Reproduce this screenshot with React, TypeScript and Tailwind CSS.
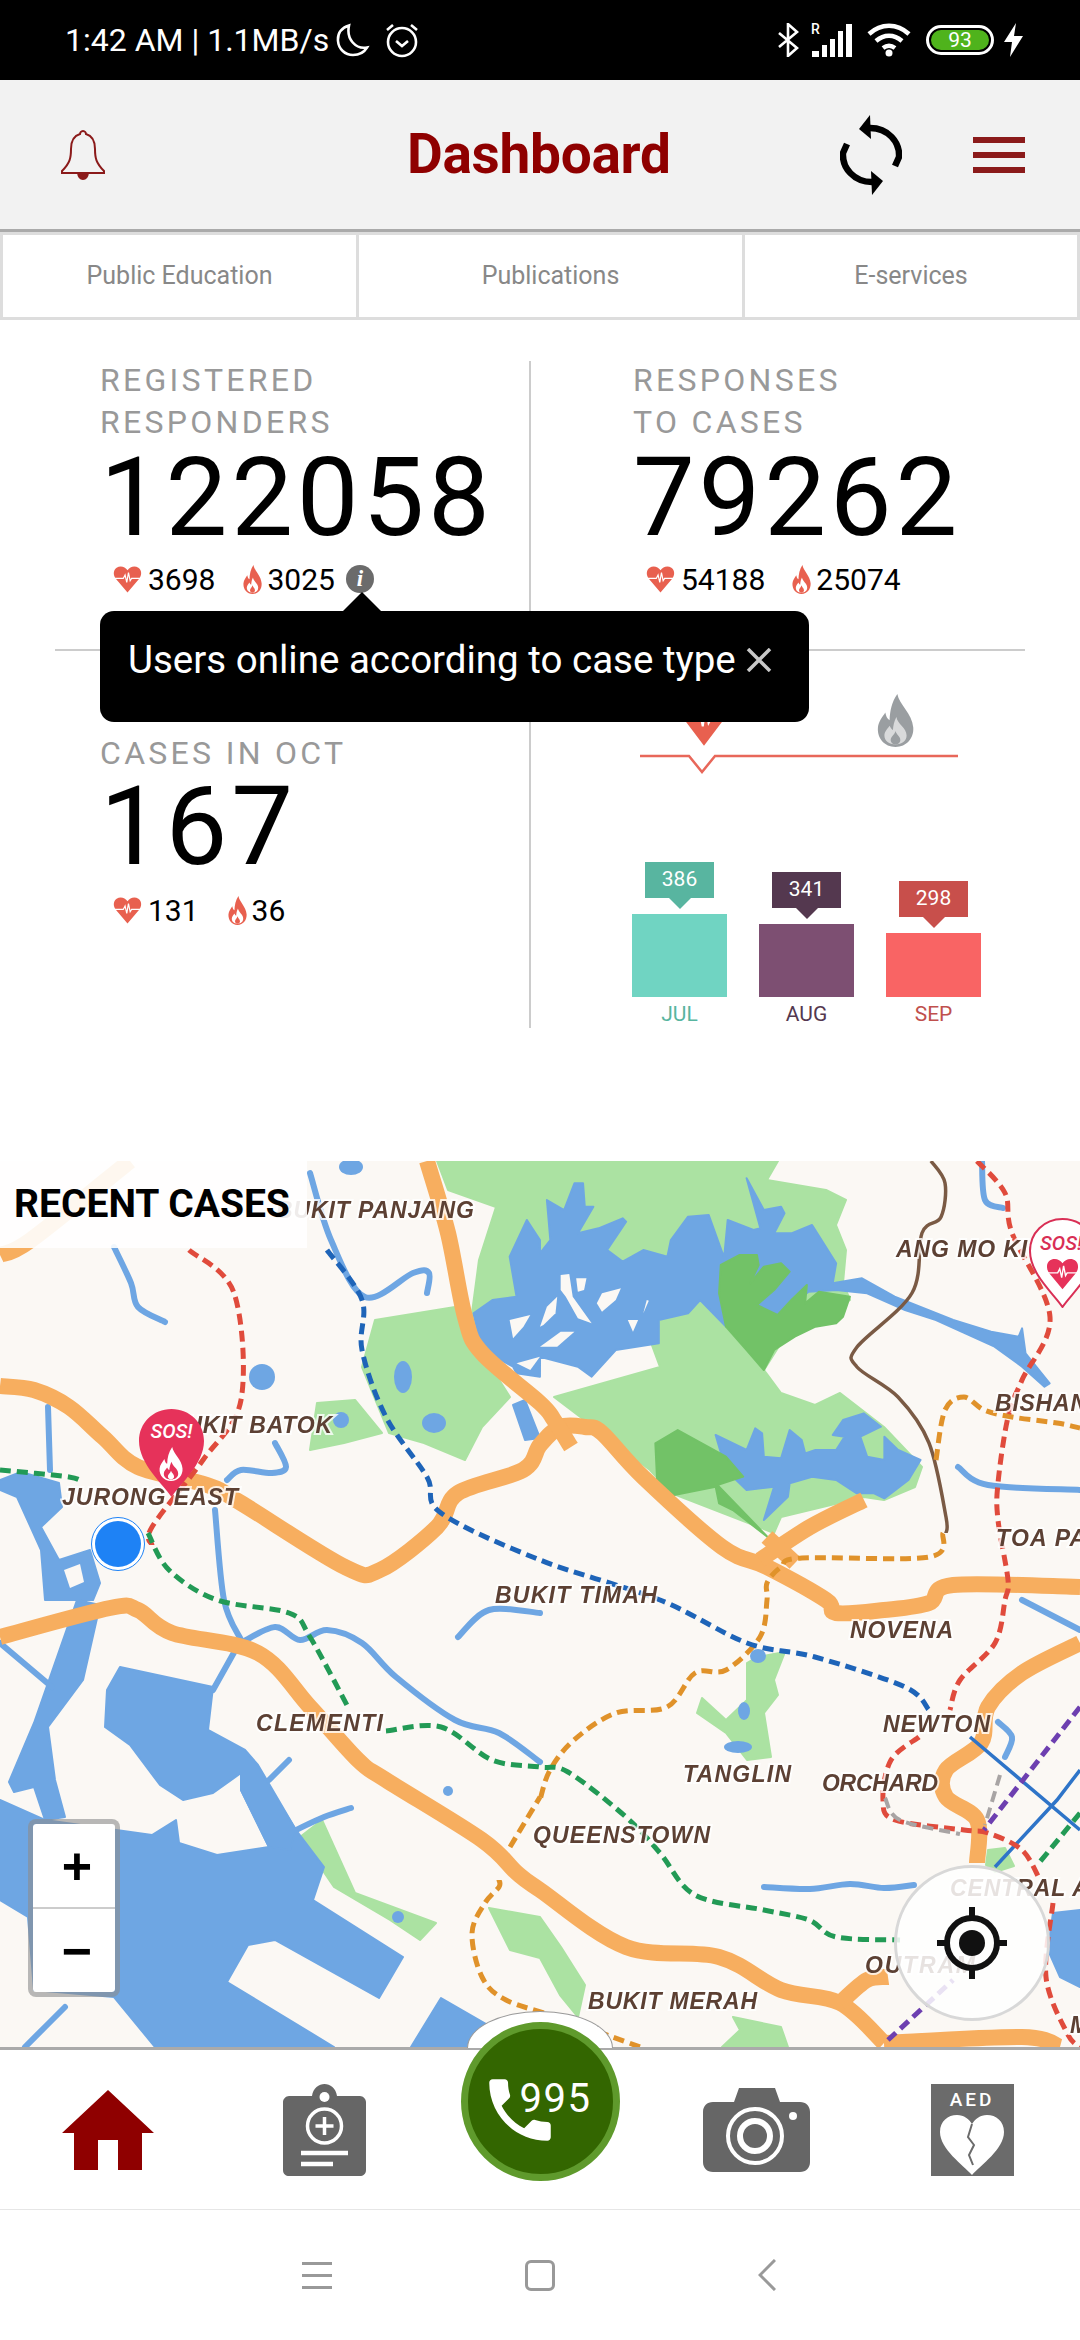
import { type ReactNode } from 'react'

type Pt = [number, number]

// Catmull-Rom through the traced points, so roads and rivers stay curved.
function smooth(pts: Pt[]) {
  let d = `M${pts[0][0]} ${pts[0][1]}`
  for (let i = 0; i < pts.length - 1; i++) {
    const p0 = pts[i - 1] ?? pts[i]
    const p1 = pts[i]
    const p2 = pts[i + 1]
    const p3 = pts[i + 2] ?? p2
    const c1 = [p1[0] + (p2[0] - p0[0]) / 6, p1[1] + (p2[1] - p0[1]) / 6]
    const c2 = [p2[0] - (p3[0] - p1[0]) / 6, p2[1] - (p3[1] - p1[1]) / 6]
    d += ` C${c1[0]} ${c1[1]} ${c2[0]} ${c2[1]} ${p2[0]} ${p2[1]}`
  }
  return d
}

// Reservoir outlines were traced on a 2.904x / 3x crop, east half and west half.
const east = (p: number[][]): Pt[] => p.map(([x, y]) => [540 + x / 2.904, 1150 + y / 3])
const west = (p: number[][]): Pt[] => p.map(([x, y]) => [x / 2.904, 1150 + y / 3])

const WATER = '#6ea6e3'
const PARK = '#abe2a2'
const FOREST = '#72c267'
const LAND = '#fbf8f4'
const ROAD = '#f7ae5f'

const PARKS: Pt[][] = [
  [[437, 1161], [778, 1161], [767, 1180], [826, 1190], [846, 1200], [836, 1225], [846, 1250], [843, 1283], [850, 1300], [781, 1343], [764, 1370], [781, 1393], [815, 1405], [840, 1393], [884, 1427], [922, 1467], [915, 1487], [884, 1500], [864, 1497], [781, 1517], [774, 1533], [671, 1493], [650, 1470], [554, 1397], [660, 1367], [650, 1340], [540, 1357], [499, 1357], [482, 1350], [472, 1313], [479, 1260], [496, 1207], [448, 1190]],
  [[375, 1320], [455, 1307], [465, 1333], [482, 1353], [510, 1397], [482, 1427], [465, 1460], [424, 1443], [389, 1433], [362, 1367]],
  [[317, 1403], [355, 1400], [382, 1433], [344, 1443], [310, 1450]],
  [[757, 1657], [785, 1652], [774, 1680], [778, 1695], [764, 1713], [771, 1757], [747, 1760], [726, 1733], [697, 1713], [702, 1698], [726, 1720], [747, 1700], [747, 1663]],
  [[300, 1837], [322, 1820], [355, 1893], [436, 1923], [420, 1940], [390, 1920], [334, 1887]],
  [[489, 1908], [540, 1917], [561, 1947], [585, 1985], [578, 2017], [560, 1995], [540, 1958], [510, 1950]],
  [[733, 2017], [781, 2027], [788, 2047], [722, 2047], [740, 2030]],
  [[988, 1850], [1005, 1848], [1014, 1866], [995, 1872], [986, 1865]],
]

const WATERS: Pt[][] = [
  // upper reservoir
  [
    ...west([[1375, 490], [1430, 450], [1500, 440], [1480, 320], [1530, 210], [1568, 270]]),
    ...east([[0, 310], [30, 270], [20, 150], [70, 180], [100, 100], [125, 100], [130, 170], [155, 170], [110, 250], [170, 235], [240, 205], [250, 215], [195, 300], [240, 335], [300, 300], [370, 320], [380, 270], [430, 200], [490, 195], [530, 310], [535, 320], [545, 210], [620, 240], [640, 235], [600, 85], [650, 180], [700, 170], [710, 190], [680, 250], [730, 250], [790, 225], [860, 340], [850, 400], [935, 385], [1030, 440], [1200, 510], [1310, 545], [1390, 560], [1400, 535], [1410, 610], [1480, 700], [1465, 710], [1400, 650], [1320, 590], [1150, 510], [1060, 480], [950, 430], [860, 420], [780, 425], [700, 490], [540, 530], [465, 450], [430, 490], [345, 510], [345, 580], [220, 600], [150, 680], [110, 650], [0, 620]]),
    ...west([[1568, 680], [1500, 670], [1490, 650], [1400, 600]]),
  ],
  // lower reservoir
  east([[510, 855], [600, 900], [625, 835], [645, 850], [650, 920], [700, 925], [725, 840], [760, 870], [770, 910], [800, 900], [860, 900], [885, 860], [850, 855], [880, 810], [940, 790], [990, 830], [950, 850], [930, 860], [950, 920], [1000, 930], [1000, 860], [1040, 900], [1105, 930], [1070, 990], [1000, 1045], [970, 1030], [920, 1030], [860, 990], [790, 980], [725, 1000], [720, 1040], [650, 1110], [680, 1010], [600, 1020], [540, 960]]),
  // Jurong lake
  [[0, 1480], [21, 1472], [59, 1483], [62, 1507], [41, 1527], [59, 1560], [90, 1550], [100, 1583], [93, 1600], [45, 1600], [41, 1550], [17, 1497], [0, 1490]],
  // west channel
  [[77, 1600], [100, 1605], [83, 1680], [48, 1727], [55, 1780], [65, 1817], [45, 1820], [34, 1787], [14, 1792], [9, 1782], [34, 1723]],
  // sea
  [[0, 1800], [45, 1820], [152, 1835], [176, 1820], [179, 1843], [217, 1855], [269, 1847], [241, 1790], [265, 1780], [296, 1830], [324, 1867], [313, 1900], [403, 1957], [379, 1998], [275, 1940], [248, 1945], [227, 1982], [334, 2047], [155, 2047], [114, 1997], [34, 1990], [28, 1917], [0, 1900]],
  // inner basin
  [[120, 1667], [213, 1687], [208, 1730], [245, 1750], [258, 1765], [296, 1830], [290, 1850], [269, 1847], [241, 1790], [241, 1773], [213, 1793], [183, 1800], [160, 1785], [130, 1745], [105, 1727], [107, 1690]],
  [[441, 1998], [500, 2032], [480, 2047], [411, 2047]],
  [[1053, 1913], [1080, 1910], [1080, 1987], [1060, 1977], [1048, 1950]],
  [[513, 1405], [525, 1400], [540, 1438], [525, 1440]],
]

const ISLANDS: Pt[][] = [
  // thin slivers left in the reservoir
  east([[60, 375], [85, 372], [95, 440], [150, 520], [110, 505], [75, 440], [60, 420]]),
  east([[105, 385], [135, 385], [128, 420], [110, 425]]),
  east([[20, 470], [50, 440], [45, 490], [10, 525], [0, 530]]),
  east([[180, 430], [235, 415], [220, 450], [180, 485], [165, 460]]),
  east([[255, 510], [285, 510], [270, 545]]),
  east([[0, 590], [60, 545], [100, 545], [50, 590]]),
  east([[310, 450], [316, 452], [300, 490]]),
  west([[1480, 510], [1540, 495], [1520, 530], [1490, 565]]),
  west([[1500, 640], [1568, 620], [1540, 660]]),
  [[60, 1525], [68, 1532], [60, 1540]],
  [[64, 1570], [80, 1564], [84, 1582], [70, 1588]],
]

const FORESTS: Pt[][] = [
  east([[525, 345], [580, 315], [630, 315], [635, 345], [610, 400], [650, 350], [700, 340], [725, 365], [680, 420], [630, 465], [690, 495], [730, 450], [775, 405], [770, 460], [810, 425], [900, 440], [880, 500], [860, 520], [800, 530], [740, 560], [680, 600], [650, 660], [600, 600], [540, 530], [520, 430]]),
  east([[335, 880], [400, 840], [540, 920], [590, 980], [515, 1005], [660, 1160], [560, 1080], [520, 1060], [510, 1010], [390, 1035], [340, 990]]),
]

const LAKES: [number, number, number, number][] = [
  [262, 1377, 13, 13],
  [403, 1377, 9, 16],
  [434, 1423, 12, 10],
  [341, 1420, 8, 8],
  [351, 1167, 12, 8],
  [758, 1656, 8, 7],
  [744, 1711, 6, 9],
  [738, 1747, 14, 6],
  [398, 1917, 6, 6],
  [448, 1791, 5, 5],
]

const RIVERS: Pt[][] = [
  [[114, 1247], [131, 1283], [138, 1307], [165, 1322]],
  [[48, 1407], [50, 1470]],
  [[215, 1510], [224, 1600], [241, 1640]],
  [[227, 1480], [241, 1470], [272, 1473], [286, 1467], [275, 1443]],
  [[310, 1173], [331, 1240], [365, 1297], [413, 1273], [429, 1273], [427, 1293]],
  [[241, 1643], [275, 1627], [300, 1640], [327, 1630], [362, 1643], [396, 1677], [455, 1720], [499, 1733], [540, 1762]],
  [[0, 1643], [52, 1687]],
  [[213, 1690], [241, 1640]],
  [[269, 1780], [289, 1760]],
  [[296, 1830], [324, 1817], [351, 1808]],
  [[25, 2047], [65, 2007]],
  [[458, 1637], [489, 1610], [540, 1613]],
  [[958, 1467], [988, 1485], [1080, 1490]],
  [[764, 1887], [810, 1889], [850, 1884], [884, 1888], [914, 1885]],
  [[1022, 1600], [1080, 1630]],
  [[998, 1722], [1012, 1737], [1005, 1757]],
  [[982, 1161], [985, 1200], [1003, 1208]],
]

const DASHED: { c: string; w: number; p: Pt[] }[] = [
  { c: '#e0922a', w: 5, p: [[943, 1533], [929, 1557], [802, 1558], [781, 1567], [767, 1583], [767, 1600], [760, 1637], [726, 1670], [695, 1673], [667, 1707], [616, 1713], [574, 1740], [550, 1770], [540, 1800]] },
  { c: '#e0922a', w: 5, p: [[510, 1847], [540, 1797]] },
  { c: '#e0922a', w: 5, p: [[499, 1880], [499, 1887], [485, 1903], [472, 1933], [482, 1977], [506, 2000], [560, 2018], [640, 2047]] },
  { c: '#e0922a', w: 5, p: [[936, 1460], [945, 1410], [964, 1397], [984, 1410], [1012, 1417], [1057, 1423], [1080, 1428]] },
  { c: '#e04b3c', w: 5, p: [[189, 1250], [234, 1293], [241, 1400], [203, 1460], [152, 1527], [152, 1545]] },
  { c: '#e04b3c', w: 5, p: [[977, 1161], [1005, 1193], [1012, 1233], [1050, 1317], [1022, 1380], [1008, 1417], [998, 1483], [998, 1520], [1008, 1580], [1005, 1600], [995, 1643], [960, 1680], [950, 1710]] },
  { c: '#e04b3c', w: 5, p: [[919, 1737], [891, 1760], [883, 1800], [895, 1820], [964, 1830], [988, 1833], [1022, 1850], [1040, 1880]] },
  { c: '#e04b3c', w: 5, p: [[1053, 1903], [1046, 1977], [1067, 2033], [1080, 2047]] },
  { c: '#229a55', w: 5, p: [[0, 1470], [69, 1477], [83, 1483]] },
  { c: '#229a55', w: 5, p: [[148, 1533], [169, 1570], [217, 1600], [289, 1613], [310, 1637], [348, 1707]] },
  { c: '#229a55', w: 5, p: [[386, 1731], [441, 1727], [492, 1760], [540, 1767], [568, 1772], [626, 1817], [660, 1853], [695, 1895], [764, 1910], [809, 1920], [836, 1937], [900, 1940]] },
  { c: '#229a55', w: 5, p: [[1080, 1813], [1039, 1863]] },
  { c: '#1e64b8', w: 5, p: [[327, 1250], [362, 1300], [362, 1350], [386, 1417], [427, 1477], [441, 1513], [540, 1560], [660, 1600], [747, 1643], [815, 1657], [905, 1687], [929, 1710]] },
  { c: '#6d3fb0', w: 5, p: [[1080, 1707], [984, 1830]] },
  { c: '#6d3fb0', w: 5, p: [[888, 2040], [953, 1980]] },
  { c: '#a8a4a4', w: 4, p: [[885, 1798], [900, 1820], [960, 1834]] },
  { c: '#a8a4a4', w: 4, p: [[1000, 1775], [985, 1825]] },
]

const ROADS: Pt[][] = [
  [[0, 1386], [34, 1390], [69, 1407], [103, 1437], [138, 1467], [207, 1485], [241, 1503], [345, 1567], [380, 1570], [437, 1527], [458, 1493], [523, 1470], [540, 1445], [560, 1427], [585, 1427], [602, 1433], [643, 1477], [722, 1547], [767, 1567], [826, 1600], [836, 1613], [884, 1610], [929, 1603], [953, 1585], [1080, 1587]],
  [[427, 1161], [448, 1233], [465, 1317], [482, 1353], [540, 1403], [554, 1420], [571, 1447]],
  [[760, 1560], [810, 1527], [864, 1500]],
  [[767, 1537], [795, 1563]],
  [[0, 1255], [31, 1240], [130, 1161]],
  [[0, 1637], [110, 1608], [138, 1610], [172, 1633], [258, 1653], [310, 1707], [358, 1760], [386, 1780], [482, 1840], [517, 1873], [540, 1890], [626, 1947], [719, 1957], [781, 1990], [840, 2003], [884, 2043]],
  [[840, 2003], [867, 1980], [888, 1977]],
  [[884, 2043], [1022, 2037], [1060, 2047]],
  [[1080, 1643], [1022, 1673], [988, 1707], [981, 1743], [946, 1770], [946, 1797], [977, 1820], [977, 1863]],
]

const PLACES: { t: string; x: number; y: number; w: number }[] = [
  { t: 'BUKIT PANJANG', x: 276, y: 1218, w: 198 },
  { t: 'BUKIT BATOK', x: 168, y: 1433, w: 164 },
  { t: 'JURONG EAST', x: 62, y: 1505, w: 176 },
  { t: 'ANG MO KIO', x: 896, y: 1257, w: 150 },
  { t: 'BISHAN', x: 995, y: 1411, w: 92 },
  { t: 'TOA PAYOH', x: 996, y: 1546, w: 142 },
  { t: 'BUKIT TIMAH', x: 495, y: 1603, w: 162 },
  { t: 'NOVENA', x: 850, y: 1638, w: 103 },
  { t: 'NEWTON', x: 883, y: 1732, w: 107 },
  { t: 'TANGLIN', x: 683, y: 1782, w: 108 },
  { t: 'ORCHARD', x: 822, y: 1791, w: 116 },
  { t: 'QUEENSTOWN', x: 533, y: 1843, w: 177 },
  { t: 'CLEMENTI', x: 256, y: 1731, w: 127 },
  { t: 'BUKIT MERAH', x: 588, y: 2009, w: 169 },
  { t: 'OUTRAM', x: 865, y: 1973, w: 110 },
  { t: 'CENTRAL AREA', x: 950, y: 1896, w: 190 },
  { t: 'MARINA', x: 1070, y: 2033, w: 90 },
]

function points(p: Pt[]) {
  return p.map((q) => q.join(',')).join(' ')
}

function MapArt() {
  return (
    <svg width="1080" height="886" viewBox="0 1161 1080 886" className="block blur-[0.7px]">
      <rect x="0" y="1161" width="1080" height="886" fill={LAND} />
      {PARKS.map((p, i) => (
        <polygon key={i} points={points(p)} fill={PARK} stroke={PARK} strokeWidth="2" strokeLinejoin="round" />
      ))}
      {WATERS.map((p, i) => (
        <polygon key={i} points={points(p)} fill={WATER} stroke={WATER} strokeWidth="2" strokeLinejoin="round" />
      ))}
      {ISLANDS.map((p, i) => (
        <polygon key={i} points={points(p)} fill={LAND} />
      ))}
      {FORESTS.map((p, i) => (
        <polygon key={i} points={points(p)} fill={FOREST} stroke={FOREST} strokeWidth="2" strokeLinejoin="round" />
      ))}
      {LAKES.map(([cx, cy, rx, ry], i) => (
        <ellipse key={i} cx={cx} cy={cy} rx={rx} ry={ry} fill={WATER} />
      ))}
      {RIVERS.map((p, i) => (
        <path key={i} d={smooth(p)} fill="none" stroke={WATER} strokeWidth="6" strokeLinecap="round" strokeLinejoin="round" />
      ))}
      <path
        d={smooth([[931, 1161], [945, 1183], [941, 1217], [922, 1233], [912, 1293], [857, 1347], [857, 1367], [898, 1397], [929, 1443], [946, 1517], [946, 1533]])}
        fill="none"
        stroke="#7a5a44"
        strokeWidth="3.5"
      />
      {ROADS.map((p, i) => (
        <path key={i} d={smooth(p)} fill="none" stroke={ROAD} strokeWidth="16" strokeLinejoin="round" />
      ))}
      <path d="M970 1737L1080 1830M995 1867L1057 1800L1080 1770" fill="none" stroke="#2e74c8" strokeWidth="3.5" />
      {DASHED.map((l, i) => (
        <path key={i} d={smooth(l.p)} fill="none" stroke={l.c} strokeWidth={l.w} strokeDasharray="11 6" />
      ))}
      {PLACES.map((l) => (
        <text
          key={l.t}
          x={l.x}
          y={l.y}
          textLength={l.w}
          fontFamily="'Liberation Sans', sans-serif"
          fontWeight="700"
          fontStyle="italic"
          fontSize="23"
          fill="#5c4033"
          stroke="#ffffff"
          strokeOpacity="0.8"
          strokeWidth="4"
          paintOrder="stroke"
        >
          {l.t}
        </text>
      ))}
    </svg>
  )
}

function Heart({ className, pulse = '#ffffff' }: { className: string; pulse?: string }) {
  return (
    <svg viewBox="0 0 24 24" className={className} preserveAspectRatio="none">
      <path fill="currentColor" d="M12 23.5L2.5 12C0 8.8 0 4.6 3 2.4 6 .4 10 1.4 12 4.6 14 1.4 18 .4 21 2.4 24 4.6 24 8.8 21.5 12Z" />
      <path fill="none" stroke={pulse} strokeWidth="1" d="M0 11.5H8.5L10 8.5 11.4 15 12.8 6.5 14.2 13.5 15.4 11.5H24" />
    </svg>
  )
}

function Flame({ className, inner = '#ffffff' }: { className: string; inner?: string }) {
  return (
    <svg viewBox="0 0 20 30" className={className} preserveAspectRatio="none">
      <path fill="currentColor" d="M11 0C12 6 19 11 19.6 19 20 25 16 30 10 30 4 30 0 25 .5 19 .8 15.5 3 13 4.5 10.5 5 13 5.6 14 6.8 14.8 7 9.5 8 4.5 11 0Z" />
      <path fill={inner} d="M10.5 13C11 17 16 19 16 23.5 16 26.6 13.4 28.6 10 28.6 6.6 28.6 4 26.6 4 23.5 4 21 6 19.5 6.8 18 7.4 19.4 8 20 8.6 20.4 8.8 18 9.2 15.4 10.5 13Z" />
      <path fill="currentColor" d="M10 21C10.4 23 12.6 24 12.6 26 12.6 27.4 11.4 28.6 10 28.6 8.6 28.6 7.4 27.4 7.4 26 7.4 24.2 9.4 23.4 10 21Z" />
    </svg>
  )
}

function Counts({ heart, flame, gap, children }: { heart: string; flame: string; gap: string; children?: ReactNode }) {
  return (
    <div className="ml-[13px] flex h-[40px] items-center text-[30px] text-black">
      <Heart className="h-[28px] w-[29px] text-[#e8604f]" />
      <span className="ml-[6px]">{heart}</span>
      <Flame className={`h-[29px] w-[19px] text-[#e8604f] ${gap}`} />
      <span className="ml-[5px]">{flame}</span>
      {children}
    </div>
  )
}

function Figure({ label, value }: { label: ReactNode; value: string }) {
  return (
    <>
      <div className="text-[32px] leading-[42px] tracking-[3.3px] text-[#999999]">{label}</div>
      <div className="text-[110px] leading-[110px] tracking-[3.8px] text-black">{value}</div>
    </>
  )
}

const BARS = [
  { month: 'JUL', value: '386', box: 'bg-[#58b5a0]', tip: 'border-t-[#58b5a0]', bar: 'h-[83px] bg-[#70d4c2]', text: 'text-[#58b5a0]' },
  { month: 'AUG', value: '341', box: 'bg-[#54384f]', tip: 'border-t-[#54384f]', bar: 'h-[73px] bg-[#7d4f72]', text: 'text-[#54384f]' },
  { month: 'SEP', value: '298', box: 'bg-[#c84f4b]', tip: 'border-t-[#c84f4b]', bar: 'h-[64px] bg-[#f96464]', text: 'text-[#c0504d]' },
]

function StatusBar() {
  return (
    <div className="flex h-[80px] items-center justify-between bg-black pr-[57px] pl-[65px] text-white">
      <div className="flex items-center">
        <span className="text-[32px] leading-none">1:42 AM | 1.1MB/s</span>
        <svg viewBox="0 0 34 34" className="ml-[7px] h-[34px] w-[34px]" fill="none" stroke="white" strokeWidth="2.6">
          <path d="M13 2.5C5 5 1.5 11 2 18c.6 8 7 14 15 14 6 0 11-2.5 14-7.5-11 2-21-8-18-22Z" />
        </svg>
        <svg viewBox="0 0 36 36" className="ml-[14px] h-[36px] w-[36px]" fill="none" stroke="white" strokeWidth="2.6">
          <circle cx="18" cy="20" r="14" />
          <path d="M12 19l6 5 6-5M3 8l6-5M33 8l-6-5" />
        </svg>
      </div>
      <div className="flex items-center">
        <svg viewBox="0 0 22 34" className="h-[34px] w-[22px]" fill="none" stroke="white" strokeWidth="2.6">
          <path d="M2 10l18 15-9 8V1l9 8L2 24" />
        </svg>
        <div className="relative ml-[12px] h-[34px] w-[42px]">
          <span className="absolute top-[-1px] left-0 text-[14px] leading-none font-medium">R</span>
          <svg viewBox="0 0 42 34" className="h-[34px] w-[42px]" fill="white">
            <path d="M1 28h7v6H1zM11 22h5v12h-5zM19 16h5v18h-5zM27 8h5v26h-5zM35 1h6v33h-6z" />
          </svg>
        </div>
        <svg viewBox="0 0 44 34" className="ml-[14px] h-[34px] w-[44px]" fill="none" stroke="white" strokeWidth="4.5">
          <path d="M2 11C14 0 30 0 42 11M9 18c8-7 18-7 26 0M16 25c4-3 8-3 12 0" />
          <circle cx="22" cy="30" r="3.5" fill="white" stroke="none" />
        </svg>
        <div className="ml-[15px] flex h-[30px] w-[68px] items-center justify-center rounded-[15px] border-[3px] border-white p-[2px]">
          <div className="flex h-full w-full items-center justify-center rounded-[10px] bg-[#4fb31c] text-[21px] leading-none text-white">
            93
          </div>
        </div>
        <svg viewBox="0 0 19 34" className="ml-[10px] h-[34px] w-[19px]" fill="white">
          <path d="M12 0L0 19h8L6 34 19 13h-9Z" />
        </svg>
      </div>
    </div>
  )
}

function Header() {
  return (
    <div className="relative flex h-[152px] items-center justify-between border-b-[3px] border-[#aaaaaa] bg-[#f2f2f2] pr-[55px] pl-[60px]">
      <svg viewBox="0 0 46 50" className="h-[50px] w-[46px]" fill="none" stroke="#8b1a1a" strokeWidth="2">
        <path d="M23 1c2 0 3 2 3 3 7 2 9 8 9 15 0 9 1 14 9 22v2H2v-2c8-8 9-13 9-22 0-7 2-13 9-15 0-1 1-3 3-3Z" />
        <path d="M18 43c1 8 9 8 10 0" fill="#8b1a1a" />
      </svg>
      <div className="absolute left-[407px] text-[55px] leading-none font-bold tracking-[-0.3px] text-[#8f0000]">Dashboard</div>
      <div className="flex items-center gap-[71px]">
        <svg viewBox="0 0 62 80" className="h-[80px] w-[62px]">
          <path d="M30 13C48 13 60 27 59 42L55 51" fill="none" stroke="black" strokeWidth="6.5" />
          <path d="M30 0L19 14 31 24Z" fill="black" />
          <g transform="rotate(180 31 40)">
            <path d="M30 13C48 13 60 27 59 42L55 51" fill="none" stroke="black" strokeWidth="6.5" />
            <path d="M30 0L19 14 31 24Z" fill="black" />
          </g>
        </svg>
        <div className="flex w-[52px] flex-col gap-[9px]">
          <div className="h-[6px] bg-[#8b1a1a]" />
          <div className="h-[6px] bg-[#8b1a1a]" />
          <div className="h-[6px] bg-[#8b1a1a]" />
        </div>
      </div>
    </div>
  )
}

function Tabs() {
  return (
    <div className="flex h-[88px] border-y-[3px] border-[#dddddd] text-[25px] text-[#888888]">
      <div className="flex w-[359px] items-center justify-center border-x-[3px] border-[#dddddd]">Public Education</div>
      <div className="flex w-[383px] items-center justify-center">Publications</div>
      <div className="flex w-[338px] items-center justify-center border-x-[3px] border-[#dddddd]">E-services</div>
    </div>
  )
}

function Stats() {
  return (
    <div className="relative h-[841px] px-[55px] pt-[41px]">
      <div className="flex h-[290px] border-b-2 border-[#cccccc]">
        <div className="w-[476px] border-r-2 border-[#cccccc] pl-[45px]">
          <div className="-mt-[2px]">
            <Figure label={<>REGISTERED<br />RESPONDERS</>} value="122058" />
          </div>
          <div className="mt-[6px]">
            <Counts heart="3698" flame="3025" gap="ml-[28px]">
              <div className="ml-[11px] flex h-[28px] w-[28px] items-center justify-center rounded-full bg-[#6b6b6b] font-['Liberation_Serif',serif] text-[23px] font-bold text-white italic">
                i
              </div>
            </Counts>
          </div>
        </div>
        <div className="pl-[102px]">
          <div className="-mt-[2px]">
            <Figure label={<>RESPONSES<br />TO CASES</>} value="79262" />
          </div>
          <div className="mt-[6px]">
            <Counts heart="54188" flame="25074" gap="ml-[27px]" />
          </div>
        </div>
      </div>

      <div className="flex h-[377px]">
        <div className="w-[476px] border-r-2 border-[#cccccc] pt-[81px] pl-[45px]">
          <div className="text-[32px] leading-[42px] tracking-[3.3px] text-[#999999]">CASES IN OCT</div>
          <div className="-mt-[2px] text-[110px] leading-[110px] tracking-[3.8px] text-black">167</div>
          <div className="mt-[8px]">
            <Counts heart="131" flame="36" gap="ml-[29px]" />
          </div>
        </div>
        <div className="pl-[101px]">
          <div className="flex h-[101px] items-end pb-[5px] pl-[47px]">
            <Heart className="h-[55px] w-[50px] text-[#e8604f]" />
            <Flame className="ml-[148px] h-[53px] w-[37px] text-[#9a9ea1]" inner="#d9dadb" />
          </div>
          <svg viewBox="0 0 318 24" className="ml-[8px] h-[24px] w-[318px]" fill="none" stroke="#e8675a" strokeWidth="2.5">
            <path d="M0 4H49L62 20 75 4H318" />
          </svg>
          <div className="mt-[86px] flex gap-[32px]">
            {BARS.map((b) => (
              <div key={b.month} className="flex h-[165px] w-[95px] flex-col items-center justify-end">
                <div className={`flex h-[36px] w-[69px] items-center justify-center text-[21px] text-white ${b.box}`}>{b.value}</div>
                <div className={`border-x-[11px] border-t-[11px] border-x-transparent ${b.tip}`} />
                <div className={`mt-[5px] w-full ${b.bar}`} />
                <div className={`mt-[5px] h-[25px] text-[21px] leading-[25px] ${b.text}`}>{b.month}</div>
              </div>
            ))}
          </div>
        </div>
      </div>

      {/* info tooltip sits over both rows */}
      <div className="absolute top-[291px] left-[100px] z-10 flex h-[111px] w-[709px] items-center rounded-[14px] bg-black pb-[14px] pl-[28px] text-[38.5px] text-white">
        <div className="absolute -top-[19px] left-[243px] border-x-[19px] border-b-[19px] border-x-transparent border-b-black" />
        <span>Users online according to case type</span>
        <svg viewBox="0 0 26 24" className="ml-[10px] h-[24px] w-[26px]" stroke="#c8c8c8" strokeWidth="3.5">
          <path d="M2 1L24 23M24 1L2 23" />
        </svg>
      </div>
    </div>
  )
}

function Pin({ children }: { children: ReactNode }) {
  return <div className="relative h-[90px] w-[67px]">{children}</div>
}

function MapPanel() {
  const drop = 'M33.5 89C25 76 1 56 1 33 1 15 15 1 33.5 1 52 1 66 15 66 33 66 56 42 76 33.5 89Z'
  return (
    <div className="relative h-[886px] overflow-hidden">
      <MapArt />

      <div className="absolute top-0 left-0 flex h-[87px] w-[307px] items-center bg-white/90 pl-[14px] text-[39px] font-bold whitespace-nowrap text-black">
        RECENT CASES
      </div>

      <div className="absolute top-[247px] left-[138px]">
        <Pin>
          <svg viewBox="0 0 67 90" className="absolute inset-0 h-[90px] w-[67px]">
            <path d={drop} fill="#e6325a" />
          </svg>
          <div className="absolute top-[13px] w-full text-center text-[20px] leading-[20px] font-medium text-white italic">SOS!</div>
          <Flame className="absolute top-[39px] left-[21px] h-[34px] w-[24px] text-white" inner="#e6325a" />
        </Pin>
      </div>

      <div className="absolute top-[57px] left-[1029px]">
        <Pin>
          <svg viewBox="0 0 67 90" className="absolute inset-0 h-[90px] w-[67px]">
            <path d={drop} fill="white" stroke="#d92f55" strokeWidth="2" />
          </svg>
          <div className="absolute top-[15px] left-[11px] text-[20px] leading-[20px] font-medium whitespace-nowrap text-[#d92f55] italic">SOS!</div>
          <Heart className="absolute top-[39px] left-[17px] h-[33px] w-[33px] text-[#e6325a]" />
        </Pin>
      </div>

      <div className="absolute top-[356px] left-[91px] h-[54px] w-[54px] rounded-full border border-[#1e82f5] bg-white p-[3px]">
        <div className="h-full w-full rounded-full bg-[#1e82f5]" />
      </div>

      <div className="absolute top-[658px] left-[28px] flex h-[178px] w-[92px] flex-col overflow-hidden rounded-[8px] border-[5px] border-[#8c8c8c]/60 bg-white bg-clip-padding text-black">
        <div className="flex flex-1 items-center justify-center border-b-2 border-[#cccccc]">
          <span className="pl-[6px] font-['Liberation_Sans',sans-serif] text-[52px] leading-none font-bold">+</span>
        </div>
        <div className="flex flex-1 items-center justify-center">
          <span className="pl-[6px] font-['Liberation_Sans',sans-serif] text-[52px] leading-none font-bold">−</span>
        </div>
      </div>

      <div className="absolute top-[704px] left-[894px] flex h-[156px] w-[156px] items-center justify-center rounded-full border-[3px] border-[#d8d8d8] bg-white/85">
        <svg viewBox="0 0 70 72" className="h-[72px] w-[70px]" fill="none" stroke="#111111">
          <circle cx="35" cy="36" r="25" strokeWidth="6" />
          <circle cx="35" cy="36" r="13" fill="#111111" stroke="none" />
          <path d="M35 0V11M35 61V72M0 36H10M60 36H70" strokeWidth="6" />
        </svg>
      </div>
    </div>
  )
}

function BottomNav() {
  return (
    <div className="relative z-10 grid h-[163px] grid-cols-5 items-center justify-items-center border-y border-t-[3px] border-t-[#aaaaaa] border-b-[#e6e6e6] bg-white">
      <svg viewBox="0 0 92 80" className="h-[80px] w-[92px]" fill="#8f0000">
        <path d="M46 0L92 43H80V80H56V50H36V80H12V43H0Z" />
      </svg>

      <svg viewBox="0 0 83 92" className="h-[92px] w-[83px]">
        <path fill="#666666" d="M6 12H29C30 4 36 0 41.500 0S53 4 54 12H77C80 12 83 15 83 18V86C83 90 80 92 77 92H6C3 92 0 90 0 86V18C0 15 3 12 6 12Z" />
        <circle cx="41.500" cy="13" r="5" fill="white" />
        <circle cx="41.500" cy="42" r="17" fill="none" stroke="white" strokeWidth="3.500" />
        <path d="M41.500 33V51M32.500 42H50.500" stroke="white" strokeWidth="3.500" />
        <path d="M18 69H65M18 80H50" stroke="white" strokeWidth="4.500" />
      </svg>

      <div className="relative z-10 -mt-[56px] flex h-[159px] w-[159px] items-center justify-center rounded-full border-[7px] border-[#5f9a2c] bg-[#336600]">
        <svg viewBox="0 0 24 24" className="absolute top-[40px] left-[11px] h-[82px] w-[82px]" fill="white">
          <path d="M20 15.500c-1.250 0-2.450-.2-3.570-.57-.35-.11-.74-.03-1.020.24l-2.200 2.200c-2.830-1.440-5.150-3.750-6.590-6.590l2.200-2.210c.28-.26.36-.65.25-1C8.700 6.450 8.500 5.250 8.500 4c0-.55-.45-1-1-1H4c-.55 0-1 .45-1 1 0 9.390 7.610 17 17 17 .55 0 1-.45 1-1v-3.500c0-.55-.45-1-1-1z" />
        </svg>
        <span className="absolute top-[50px] left-[52px] text-[40px] leading-none tracking-[1.5px] text-white">995</span>
      </div>

      <svg viewBox="0 0 107 84" className="h-[84px] w-[107px]">
        <path fill="#666666" d="M10 14H31L36 0H72L77 14H97C103 14 107 18 107 24V74C107 80 103 84 97 84H10C4 84 0 80 0 74V24C0 18 4 14 10 14Z" />
        <circle cx="52" cy="48" r="27" fill="none" stroke="white" strokeWidth="4" />
        <circle cx="52" cy="48" r="15" fill="none" stroke="white" strokeWidth="6" />
        <circle cx="90" cy="28" r="4" fill="white" />
      </svg>

      <div className="flex h-[92px] w-[83px] flex-col items-center bg-[#6b6b6b] text-white">
        <div className="mt-[4px] text-[19px] leading-[24px] font-medium tracking-[3px]">AED</div>
        <svg viewBox="0 0 66 60" className="mt-[3px] h-[60px] w-[66px]">
          <path fill="white" d="M33 60C24 50 1 34 1 17 1 6 9 0 18 0 25 0 30 4 33 9 36 4 41 0 48 0 57 0 65 6 65 17 65 34 42 50 33 60Z" />
          <path fill="none" stroke="#6b6b6b" strokeWidth="2" d="M33 9L29 22 35 30 30 40 34 50" />
        </svg>
      </div>

      <div className="absolute -top-[39px] left-[467px] h-[37px] w-[146px] rounded-t-[73px_37px] border border-b-0 border-[#9a9a9a] bg-white" />
    </div>
  )
}

function SystemNav() {
  return (
    <div className="relative flex flex-1 items-center justify-center bg-white">
      <div className="absolute left-[302px] flex w-[30px] flex-col gap-[9px]">
        <div className="h-[3px] bg-[#999999]" />
        <div className="h-[3px] bg-[#999999]" />
        <div className="h-[3px] bg-[#999999]" />
      </div>
      <div className="h-[31px] w-[30px] rounded-[6px] border-[3px] border-[#999999]" />
      <svg viewBox="0 0 18 32" className="absolute left-[758px] h-[32px] w-[18px]" fill="none" stroke="#999999" strokeWidth="3">
        <path d="M17 1L2 16 17 31" />
      </svg>
    </div>
  )
}

export default function App() {
  return (
    <div className="flex h-[2340px] w-[1080px] flex-col overflow-hidden bg-white font-['Roboto',sans-serif]">
      <StatusBar />
      <Header />
      <Tabs />
      <Stats />
      <MapPanel />
      <BottomNav />
      <SystemNav />
    </div>
  )
}
